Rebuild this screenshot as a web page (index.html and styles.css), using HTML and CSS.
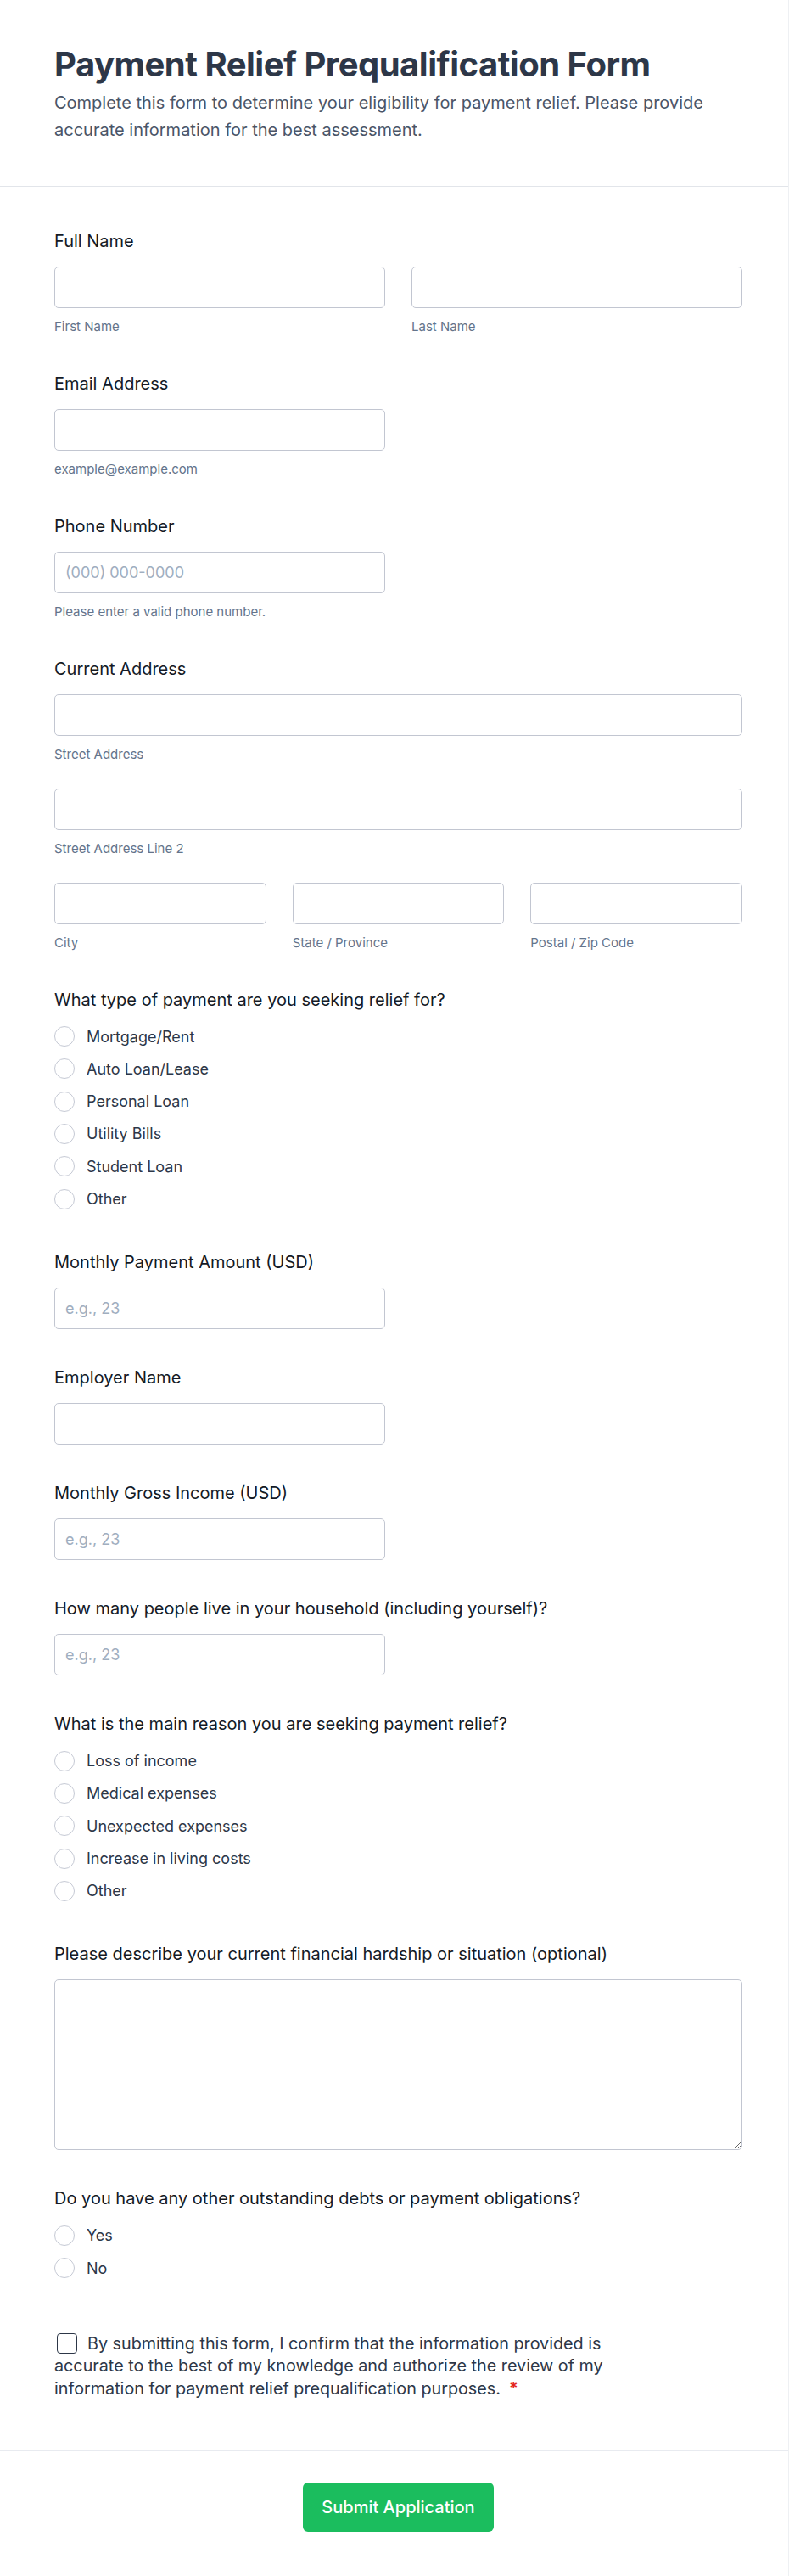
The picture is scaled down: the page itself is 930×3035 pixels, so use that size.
FILE: index.html
```html
<!DOCTYPE html>
<html lang="en">
<head>
<meta charset="utf-8">
<title>Payment Relief Prequalification Form</title>
<link rel="stylesheet" href="styles.css">
</head>
<body>
<div class="page">
  <header class="header">
    <h1 class="title">Payment Relief Prequalification Form</h1>
    <p class="subtitle">Complete this form to determine your eligibility for payment relief. Please provide accurate information for the best assessment.</p>
  </header>

  <form class="form">
    <div class="field">
      <label class="label">Full Name</label>
      <div class="grid2">
        <div>
          <input class="input" type="text">
          <div class="sub">First Name</div>
        </div>
        <div>
          <input class="input" type="text">
          <div class="sub">Last Name</div>
        </div>
      </div>
    </div>

    <div class="field">
      <label class="label">Email Address</label>
      <div class="half">
        <input class="input" type="email">
        <div class="sub">example@example.com</div>
      </div>
    </div>

    <div class="field">
      <label class="label">Phone Number</label>
      <div class="half">
        <input class="input" type="tel" placeholder="(000) 000-0000">
        <div class="sub">Please enter a valid phone number.</div>
      </div>
    </div>

    <div class="field">
      <label class="label">Current Address</label>
      <div class="stack">
        <div>
          <input class="input" type="text">
          <div class="sub">Street Address</div>
        </div>
        <div>
          <input class="input" type="text">
          <div class="sub">Street Address Line 2</div>
        </div>
        <div class="grid3">
          <div>
            <input class="input" type="text">
            <div class="sub">City</div>
          </div>
          <div>
            <input class="input" type="text">
            <div class="sub">State / Province</div>
          </div>
          <div>
            <input class="input" type="text">
            <div class="sub">Postal / Zip Code</div>
          </div>
        </div>
      </div>
    </div>

    <div class="field group">
      <label class="label">What type of payment are you seeking relief for?</label>
      <div class="options">
        <label class="option"><input type="radio" name="ptype"><span>Mortgage/Rent</span></label>
        <label class="option"><input type="radio" name="ptype"><span>Auto Loan/Lease</span></label>
        <label class="option"><input type="radio" name="ptype"><span>Personal Loan</span></label>
        <label class="option"><input type="radio" name="ptype"><span>Utility Bills</span></label>
        <label class="option"><input type="radio" name="ptype"><span>Student Loan</span></label>
        <label class="option"><input type="radio" name="ptype"><span>Other</span></label>
      </div>
    </div>

    <div class="field">
      <label class="label">Monthly Payment Amount (USD)</label>
      <div class="half"><input class="input" type="text" placeholder="e.g., 23"></div>
    </div>

    <div class="field">
      <label class="label">Employer Name</label>
      <div class="half"><input class="input" type="text"></div>
    </div>

    <div class="field">
      <label class="label">Monthly Gross Income (USD)</label>
      <div class="half"><input class="input" type="text" placeholder="e.g., 23"></div>
    </div>

    <div class="field">
      <label class="label">How many people live in your household (including yourself)?</label>
      <div class="half"><input class="input" type="text" placeholder="e.g., 23"></div>
    </div>

    <div class="field group">
      <label class="label">What is the main reason you are seeking payment relief?</label>
      <div class="options">
        <label class="option"><input type="radio" name="reason"><span>Loss of income</span></label>
        <label class="option"><input type="radio" name="reason"><span>Medical expenses</span></label>
        <label class="option"><input type="radio" name="reason"><span>Unexpected expenses</span></label>
        <label class="option"><input type="radio" name="reason"><span>Increase in living costs</span></label>
        <label class="option"><input type="radio" name="reason"><span>Other</span></label>
      </div>
    </div>

    <div class="field">
      <label class="label">Please describe your current financial hardship or situation (optional)</label>
      <textarea class="textarea"></textarea>
    </div>

    <div class="field group">
      <label class="label">Do you have any other outstanding debts or payment obligations?</label>
      <div class="options">
        <label class="option"><input type="radio" name="debts"><span>Yes</span></label>
        <label class="option"><input type="radio" name="debts"><span>No</span></label>
      </div>
    </div>

    <div class="consent">
      <label class="consent-text"><input class="checkbox" type="checkbox">By submitting this form, I confirm that the information provided is accurate to the best of my knowledge and authorize the review of my information for payment relief prequalification purposes.<span class="req">*</span></label>
    </div>
  </form>

  <footer class="footer">
    <button class="submit" type="button">Submit Application</button>
  </footer>
</div>
</body>
</html>
```

FILE: styles.css
```css
* { box-sizing: border-box; }

html, body {
  margin: 0;
  padding: 0;
  background: #ffffff;
}

body {
  font-family: Inter, "Noto Sans", "Liberation Sans", sans-serif;
  color: #1f2937;
}

.page {
  min-height: 3035px;
  border-right: 1px solid #eef0f3;
}

.header {
  padding: 52px 54px 50px 64px;
  border-bottom: 1px solid #e2e5ea;
}

.title {
  margin: 0 0 5px 0;
  font-size: 40px;
  line-height: 48px;
  font-weight: 700;
  color: #2d3748;
  letter-spacing: -0.5px;
}

.subtitle {
  margin: 0;
  font-size: 20px;
  line-height: 32px;
  color: #4a5568;
}

.form {
  padding: 50.5px 54px 60px 64px;
}

.field {
  margin-bottom: 44px;
}

.field.group {
  margin-bottom: 48px;
}

.label {
  display: block;
  font-size: 20px;
  line-height: 27px;
  font-weight: 400;
  color: #141a26;
  margin-bottom: 16px;
}

.grid2 {
  display: grid;
  grid-template-columns: 1fr 1fr;
  column-gap: 31px;
}

.grid3 {
  display: grid;
  grid-template-columns: 1fr 1fr 1fr;
  column-gap: 31px;
}

.half {
  width: 390px;
}

.stack {
  display: flex;
  flex-direction: column;
  gap: 30px;
}

.input {
  display: block;
  width: 100%;
  height: 49px;
  margin: 0;
  padding: 0 12px;
  border: 1px solid #c2c6d1;
  border-radius: 5px;
  background: #fff;
  font-family: inherit;
  font-size: 18px;
  color: #1f2937;
  outline: none;
}

.input::placeholder {
  color: #a0aec0;
}

.sub {
  margin-top: 12px;
  font-size: 15px;
  line-height: 20px;
  color: #64748b;
}

.options {
  display: flex;
  flex-direction: column;
  gap: 11.33px;
}

.option {
  display: flex;
  align-items: center;
  height: 27px;
  font-size: 18px;
  line-height: 27px;
  color: #2d3748;
}

.option input {
  appearance: none;
  -webkit-appearance: none;
  width: 24px;
  height: 24px;
  margin: 0 14px 0 0;
  border: 1.5px solid #c5c9d4;
  border-radius: 50%;
  background: #fff;
  flex: none;
}

.textarea {
  display: block;
  width: 100%;
  height: 201px;
  margin: 0;
  padding: 12px;
  border: 1px solid #c2c6d1;
  border-radius: 5px;
  font-family: inherit;
  font-size: 18px;
  resize: vertical;
  outline: none;
}

.consent {
  padding-top: 14px;
  max-width: 672px;
}

.consent-text {
  display: block;
  font-size: 19.75px;
  line-height: 26.5px;
  color: #2d3748;
}

.checkbox {
  appearance: none;
  -webkit-appearance: none;
  display: inline-block;
  width: 24px;
  height: 24px;
  margin: 0 12px 0 3px;
  border: 1.5px solid #2d3748;
  border-radius: 4px;
  background: #fff;
  vertical-align: -5px;
}

.req {
  color: #e3241b;
  font-weight: 600;
  margin-left: 10px;
}

.footer {
  border-top: 1px solid #e8ebf0;
  padding: 37px 54px 51px 64px;
  display: flex;
  justify-content: center;
}

.submit {
  height: 58px;
  padding: 0 22px;
  border: none;
  border-radius: 6px;
  background: #1bbd5e;
  color: #ffffff;
  font-family: inherit;
  font-size: 20px;
  font-weight: 500;
  line-height: 28px;
  cursor: pointer;
}
```
